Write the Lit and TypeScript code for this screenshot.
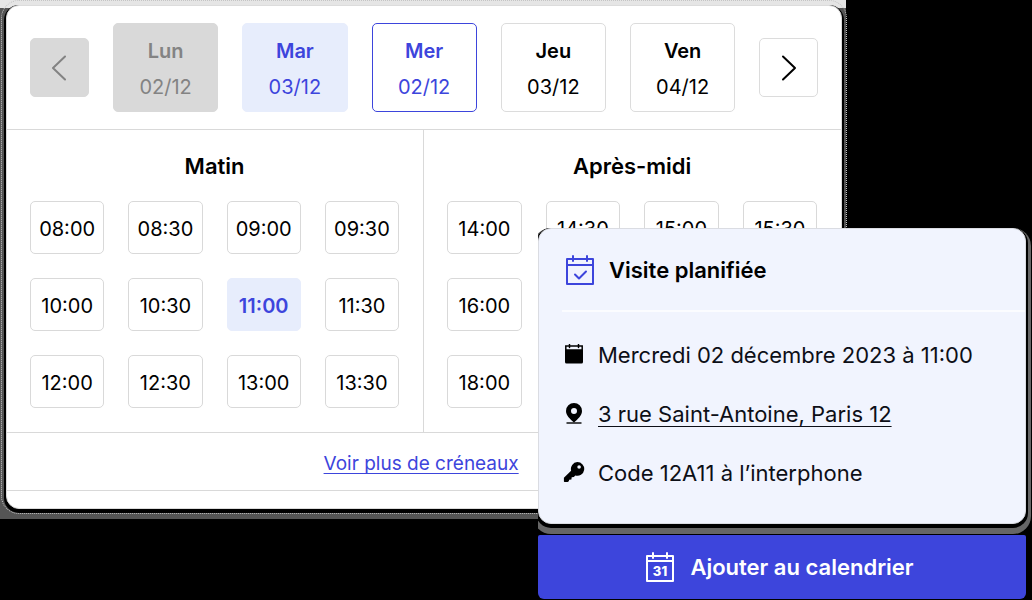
import { LitElement, html, css } from "lit";
import { customElement, property, state } from "lit/decorators.js";
import { classMap } from "lit/directives/class-map.js";

interface Day {
  name: string;
  date: string;
  tone: "disabled" | "available" | "current" | "plain";
}

const DAYS: Day[] = [
  { name: "Lun", date: "02/12", tone: "disabled" },
  { name: "Mar", date: "03/12", tone: "available" },
  { name: "Mer", date: "02/12", tone: "current" },
  { name: "Jeu", date: "03/12", tone: "plain" },
  { name: "Ven", date: "04/12", tone: "plain" },
];

const MORNING = [
  "08:00", "08:30", "09:00", "09:30",
  "10:00", "10:30", "11:00", "11:30",
  "12:00", "12:30", "13:00", "13:30",
];

const AFTERNOON = [
  "14:00", "14:30", "15:00", "15:30",
  "16:00", "16:30", "17:00", "17:30",
  "18:00", "18:30", "19:00", "19:30",
];

const base = css`
  * {
    box-sizing: border-box;
  }
  button {
    font: inherit;
    color: inherit;
    margin: 0;
    padding: 0;
    border: 0;
    background: none;
    cursor: pointer;
  }
  h2,
  ul {
    margin: 0;
    padding: 0;
  }
  svg {
    display: block;
    flex: none;
  }
`;

@customElement("slot-group")
class SlotGroup extends LitElement {
  static styles = [
    base,
    css`
      :host {
        display: block;
        padding: 22px 24px 24px 23px;
      }
      .title {
        font-size: 22px;
        line-height: 28px;
        font-weight: 600;
        text-align: center;
        margin-bottom: 21px;
      }
      .grid {
        display: grid;
        grid-template-columns: repeat(4, 1fr);
        gap: 24px;
      }
      .slot {
        height: 53px;
        padding-top: 2px;
        border: 1px solid #d9d9d9;
        border-radius: 5px;
        font-size: 20px;
      }
      .slot.selected {
        border-color: #e7edfc;
        background: #e7edfc;
        color: #3d45dc;
        font-weight: 600;
      }
    `,
  ];

  @property() label = "";
  @property({ attribute: false }) times: string[] = [];
  @property() selected = "";

  private pick(time: string) {
    this.dispatchEvent(new CustomEvent("pick", { detail: time }));
  }

  render() {
    return html`
      <h2 class="title">${this.label}</h2>
      <div class="grid">
        ${this.times.map(
          (t) => html`<button
            class=${classMap({ slot: true, selected: t === this.selected })}
            @click=${() => this.pick(t)}
          >${t}</button>`
        )}
      </div>
    `;
  }
}

@customElement("visit-scheduler")
class VisitScheduler extends LitElement {
  static styles = [
    base,
    css`
      :host {
        display: block;
        background: #fff;
        border: 1px solid #dcdcdc;
        border-radius: 13px;
        padding-bottom: 17px;
      }
      .days {
        display: flex;
        align-items: center;
        gap: 24px;
        padding: 17px 23px;
        border-bottom: 1px solid #d9d9d9;
      }
      .nav {
        display: grid;
        place-items: center;
        flex: none;
        width: 59px;
        height: 59px;
        border: 1px solid #dcdcdc;
        border-radius: 5px;
      }
      .day {
        flex: 1;
        display: flex;
        flex-direction: column;
        align-items: center;
        justify-content: center;
        gap: 8px;
        height: 89px;
        padding-top: 2px;
        border: 1px solid #dcdcdc;
        border-radius: 5px;
        font-size: 20px;
        line-height: 28px;
      }
      .name {
        font-weight: 600;
      }
      .disabled {
        background: #d9d9d9;
        border-color: #d9d9d9;
        color: #838383;
      }
      .available {
        background: #e7edfc;
        border-color: #e7edfc;
        color: #3d45dc;
      }
      .current {
        border-color: #3d45dc;
        color: #3d45dc;
      }
      .halves {
        display: grid;
        grid-template-columns: 1fr 1fr;
        border-bottom: 1px solid #d9d9d9;
      }
      .halves > :first-child {
        border-right: 1px solid #d9d9d9;
      }
      .more {
        display: flex;
        justify-content: center;
        padding: 17px 30px 12px 24px;
        border-bottom: 1px solid #d9d9d9;
      }
      .more a {
        color: #3d45dc;
        font-size: 19px;
        line-height: 28px;
        text-decoration-thickness: 1px;
        text-underline-offset: 3px;
        text-decoration-skip-ink: none;
      }
    `,
  ];

  @state() private time = "11:00";

  private onPick(e: CustomEvent<string>) {
    this.time = e.detail;
  }

  render() {
    return html`
      <div class="days">
        <button class="nav disabled" aria-label="Jours précédents" disabled>
          <svg width="16" height="26" viewBox="0 0 16 26" fill="none" stroke="currentColor" stroke-width="2" stroke-linecap="round" stroke-linejoin="round">
            <path d="M13 1.500 1 13l12 11.500" />
          </svg>
        </button>
        ${DAYS.map(
          (d) => html`<button class="day ${d.tone}" ?disabled=${d.tone === "disabled"}>
            <span class="name">${d.name}</span><span>${d.date}</span>
          </button>`
        )}
        <button class="nav" aria-label="Jours suivants">
          <svg width="16" height="26" viewBox="0 0 16 26" fill="none" stroke="currentColor" stroke-width="2" stroke-linecap="round" stroke-linejoin="round">
            <path d="m2 1.500 12 11.500L2 24.500" />
          </svg>
        </button>
      </div>
      <div class="halves">
        <slot-group label="Matin" .times=${MORNING} selected=${this.time} @pick=${this.onPick}></slot-group>
        <slot-group label="Après-midi" .times=${AFTERNOON} selected=${this.time} @pick=${this.onPick}></slot-group>
      </div>
      <div class="more"><a href="#">Voir plus de créneaux</a></div>
    `;
  }
}

@customElement("visit-summary")
class VisitSummary extends LitElement {
  static styles = [
    base,
    css`
      :host {
        display: block;
        background: #f1f4fe;
        border: 1px solid #dadce2;
        border-radius: 13px;
        padding-bottom: 22px;
      }
      .head {
        display: flex;
        align-items: center;
        gap: 15px;
        margin-left: 23px;
        padding: 25px 4px 24px;
        border-bottom: 2px solid #fbfcff;
      }
      .head svg {
        color: #3d45dc;
      }
      .title {
        font-size: 22px;
        line-height: 32px;
        font-weight: 600;
      }
      .facts {
        list-style: none;
        display: grid;
        gap: 27px;
        padding: 27px 24px 12px 24px;
      }
      .fact {
        display: flex;
        align-items: center;
        gap: 13px;
        font-size: 22px;
        line-height: 32px;
        color: #0d0f17;
      }
      .fact svg {
        color: #000;
      }
      .fact a {
        color: inherit;
        text-decoration-thickness: 1px;
        text-underline-offset: 4px;
        text-decoration-skip-ink: none;
      }
    `,
  ];

  render() {
    return html`
      <div class="head">
        <svg width="28" height="30" viewBox="0 0 28 30" fill="none" stroke="currentColor" stroke-width="2" stroke-linecap="round" stroke-linejoin="round">
          <path d="M1 4h26v25H1zM1 10h26M7 1v5M21 1v5M9 19.500l4 4 7-7" />
        </svg>
        <h2 class="title">Visite planifiée</h2>
      </div>
      <ul class="facts">
        <li class="fact">
          <svg width="22" height="22" viewBox="0 0 22 22" fill="none" stroke="currentColor" stroke-width="1.500" stroke-linecap="round">
            <path d="M2.800 2h16.400v4H2.800zM6.500.5v3M15.500.5v3" />
            <path d="M2 6h18v12a1.500 1.500 0 0 1-1.500 1.500h-15A1.500 1.500 0 0 1 2 18z" fill="currentColor" stroke="none" />
          </svg>
          <span>Mercredi 02 décembre 2023 à 11:00</span>
        </li>
        <li class="fact">
          <svg width="22" height="22" viewBox="0 0 22 22" fill="currentColor">
            <path fill-rule="evenodd" d="M11 0a8 8 0 0 0-8 8c0 4.600 4.200 8.200 8 11.500 3.800-3.300 8-6.900 8-11.500a8 8 0 0 0-8-8zm0 5a3 3 0 1 1 0 6 3 3 0 0 1 0-6z" />
            <path d="M3.500 19.300h15v1.400h-15z" />
          </svg>
          <a href="#">3 rue Saint-Antoine, Paris 12</a>
        </li>
        <li class="fact">
          <svg width="22" height="22" viewBox="0 0 22 22" fill="currentColor">
            <path fill-rule="evenodd" d="M14.300 0a6.900 6.900 0 1 1-2 13.500l-1.400 1.500-2.200.3-.3 2.200-2.200.3-.4 1.500-1.200.7H1.500l-.6-.6v-3.600l7.200-7.100A7 7 0 0 1 14.300 0zm1.800 3.200a1.800 1.800 0 1 0 0 3.600 1.800 1.800 0 0 0 0-3.600z" />
          </svg>
          <span>Code 12A11 à l’interphone</span>
        </li>
      </ul>
    `;
  }
}

@customElement("app-root")
class AppRoot extends LitElement {
  static styles = [
    base,
    css`
      :host {
        display: block;
        position: relative;
        min-height: 100vh;
        overflow: hidden;
        background: #000;
        color: #000;
        font-family: Inter, "Liberation Sans", sans-serif;
      }
      .board {
        position: relative;
        width: 82%;
        padding: 5px 4px 10px 6px;
        background: linear-gradient(#e5e5e5 8px, #555 8px);
      }
      .planner {
        box-shadow: 0 2px 0 2px #000;
        outline: 1px dotted #c4c4c4;
        outline-offset: 4px;
      }
      .confirm {
        position: absolute;
        right: 0;
        top: 225px;
        width: 496px;
        padding: 3px 6px 0 2px;
      }
      .summary {
        position: relative;
        box-shadow: 0 2px 0 2px #000, 0 5px 0 5px #666;
        clip-path: inset(-1px -6px -11px 0);
      }
      .add {
        display: flex;
        align-items: center;
        justify-content: center;
        gap: 16px;
        width: 100%;
        height: 64px;
        margin-top: 11px;
        padding-right: 4px;
        border-radius: 2px 2px 6px 6px;
        background: #3d45dc;
        color: #fff;
        font-size: 22px;
        font-weight: 600;
      }
      .num {
        font-size: 13px;
        font-weight: 800;
      }
    `,
  ];

  render() {
    return html`
      <main class="board"><visit-scheduler class="planner"></visit-scheduler></main>
      <aside class="confirm">
        <visit-summary class="summary"></visit-summary>
        <button class="add">
          <svg width="28" height="30" viewBox="0 0 28 30" fill="none" stroke="currentColor" stroke-width="2" stroke-linecap="round" stroke-linejoin="round">
            <path d="M1 4h26v25H1zM1 9h26M7 1v5M21 1v5" />
            <text class="num" x="14" y="24" text-anchor="middle" fill="currentColor" stroke="none">31</text>
          </svg>
          Ajouter au calendrier
        </button>
      </aside>
    `;
  }
}
